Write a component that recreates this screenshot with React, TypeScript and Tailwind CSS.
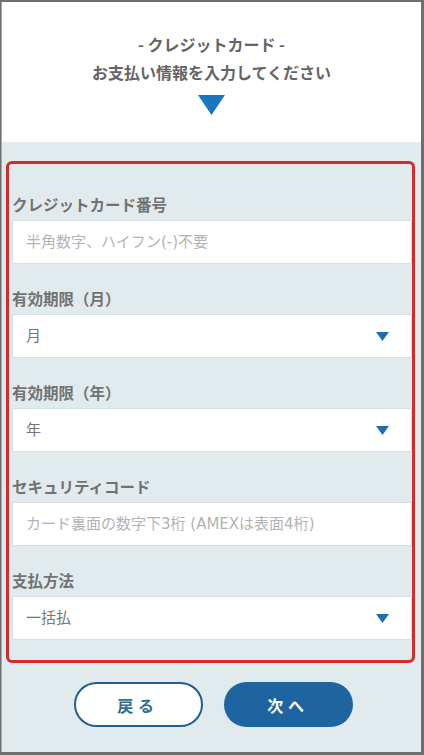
import React from 'react'

const FONT = "font-['Noto_Sans_CJK_JP','Noto_Sans',sans-serif]"

interface Field {
  label: string
  kind: 'input' | 'select'
  text: string
}

const FIELDS: Field[] = [
  { label: 'クレジットカード番号', kind: 'input', text: '半角数字、ハイフン(-)不要' },
  { label: '有効期限（月）', kind: 'select', text: '月' },
  { label: '有効期限（年）', kind: 'select', text: '年' },
  { label: 'セキュリティコード', kind: 'input', text: 'カード裏面の数字下3桁 (AMEXは表面4桁)' },
  { label: '支払方法', kind: 'select', text: '一括払' },
]

function Caret() {
  return (
    <svg width="13" height="9" viewBox="0 0 13 9" className="shrink-0">
      <path d="M0 0h13L6.5 9z" fill="#1f6eb0" />
    </svg>
  )
}

export default function App() {
  return (
    <div
      className={`flex h-[755px] w-[424px] flex-col overflow-hidden border-t-2 border-r-[3px] border-b-[3px] border-l border-[#6f6f6f] ${FONT}`}
    >
      <div className="flex flex-1 flex-col border-l border-[#7cb1e8]">
        <header className="flex h-[140px] shrink-0 flex-col items-center bg-white pt-[28px]">
          <p className="text-[16px] font-bold leading-[28px] text-[#656565]">- クレジットカード -</p>
          <p className="text-[16px] font-bold leading-[28px] text-[#656565]">お支払い情報を入力してください</p>
          <svg width="27" height="20" viewBox="0 0 27 20" className="mt-[9px]">
            <path d="M0 0h27L13.5 20z" fill="#1c76bd" />
          </svg>
        </header>

        <main className="flex flex-1 flex-col bg-[#e1ebee] pt-[19px]">
          <div className="ml-[4px] mr-[6px] flex flex-col gap-[24px] rounded-[6px] border-[3px] border-[#d32a2a] pt-[30px] pb-[20px] pl-[3px]">
            {FIELDS.map((f) => (
              <div key={f.label} className="flex flex-col">
                <label className="mb-[6px] text-[15.5px] font-bold leading-[20px] text-[#727272]">
                  {f.label}
                </label>
                <div className="flex h-[44px] items-center justify-between rounded-[2px] border border-[#d3e0e4] bg-white pl-[13px] pr-[22px]">
                  <span
                    className={`font-['DejaVu_Sans','Noto_Sans_CJK_JP',sans-serif] text-[15px] ${
                      f.kind === 'input' ? 'text-[#b3b3b3]' : 'text-[#767676]'
                    }`}
                  >
                    {f.text}
                  </span>
                  {f.kind === 'select' && <Caret />}
                </div>
              </div>
            ))}
          </div>

          <div className="mt-[19px] flex justify-center gap-[21px] pl-[3px]">
            <button className="flex h-[45px] w-[129px] items-center justify-center rounded-full border-2 border-[#1f5f93] bg-white text-[16px] font-bold tracking-[0.3em] text-[#2e6f8e]">
              戻る
            </button>
            <button className="flex h-[45px] w-[129px] items-center justify-center rounded-full bg-[#1d64a0] text-[16px] font-bold tracking-[0.3em] text-white">
              次へ
            </button>
          </div>
        </main>
      </div>
    </div>
  )
}
